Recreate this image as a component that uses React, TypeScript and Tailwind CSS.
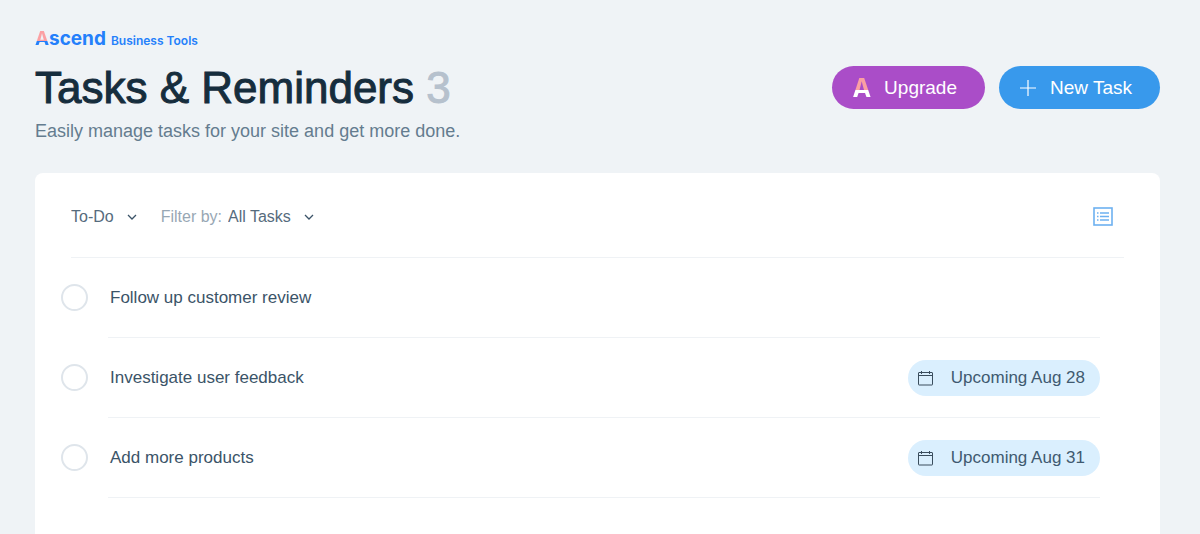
import { useState } from 'react';

interface Task {
  id: number;
  title: string;
  due?: string;
}

const TASKS: Task[] = [
  { id: 1, title: 'Follow up customer review' },
  { id: 2, title: 'Investigate user feedback', due: 'Aug 28' },
  { id: 3, title: 'Add more products', due: 'Aug 31' },
];

function Chevron() {
  return (
    <svg viewBox="0 0 10 6" className="pointer-events-none -ml-5 h-[6px] w-[10px]" fill="none" stroke="#3b5368" strokeWidth="1.3">
      <path d="M1 1l4 4 4-4" />
    </svg>
  );
}

function CalendarIcon() {
  return (
    <svg viewBox="0 0 16 16" className="size-4 shrink-0" fill="none" stroke="#3a4d5d">
      <rect x="0.5" y="2.5" width="14" height="12.5" rx="0.5" />
      <path d="M0.5 5.5h14M3.5 1v3M11.5 1v3" />
    </svg>
  );
}

function ListIcon() {
  return (
    <svg viewBox="0 0 20 20" className="size-5" fill="none" stroke="#6db1f1">
      <rect x="1" y="1" width="18" height="17" strokeWidth="1.6" />
      <path d="M4 6h1.5M4 9.5h1.5M4 13h1.5M7 6h9M7 9.5h9M7 13h9" strokeWidth="1.3" />
    </svg>
  );
}

function TaskRow({ task }: { task: Task }) {
  const [done, setDone] = useState(false);
  const inputId = `task-${task.id}`;

  return (
    <li className="flex h-20 items-center gap-5">
      <input
        id={inputId}
        type="checkbox"
        checked={done}
        onChange={() => setDone(!done)}
        className="mb-[1px] size-[27px] shrink-0 cursor-pointer appearance-none rounded-full border-2 border-[#dfe5eb] bg-white checked:bg-[#3899ec]"
      />
      <div className="flex h-20 flex-1 items-center justify-between border-b border-[#eff2f5] pl-[2px]">
        <label htmlFor={inputId} className="text-[17px] text-[#3b5468]">
          {task.title}
        </label>
        {task.due && (
          <span className="flex h-9 items-center gap-[17px] rounded-full bg-[#daeffe] pr-[15px] pl-[10px] text-[17px] text-[#3f5a70]">
            <CalendarIcon />
            Upcoming {task.due}
          </span>
        )}
      </div>
    </li>
  );
}

export default function App() {
  const [status, setStatus] = useState('To-Do');
  const [filter, setFilter] = useState('All Tasks');

  return (
    <div className="flex min-h-screen flex-col bg-[#eff3f6] pt-[29px] pr-10 pl-[35px] font-['Liberation_Sans',sans-serif]">
      <header>
        <div className="flex h-5 items-baseline gap-[5px] text-[#2480fb]">
          <span className="font-['Inter',sans-serif] text-[19px] leading-5 font-bold">
            <span className="bg-linear-to-b from-[#fba0a3] from-62% to-[#2480fb] to-62% bg-clip-text text-transparent">A</span>scend
          </span>
          <span className="font-['Inter',sans-serif] text-[12px] leading-5 font-semibold">Business Tools</span>
        </div>

        <div className="mt-[17px] flex items-center justify-between">
          <h1 className="text-[44px] leading-[43px] text-[#162d3d] [-webkit-text-stroke:1px]">
            Tasks &amp; Reminders <span className="text-[#b6c1cd]">3</span>
          </h1>
          <div className="flex gap-[14px] text-[19px] text-white">
            <button type="button" className="flex h-[43px] items-center gap-[13px] rounded-full bg-[#aa4dc8] pt-[1px] pr-7 pl-5">
              <span className="bg-linear-to-b from-[#fba0a3] from-58% to-white to-58% bg-clip-text font-['Inter',sans-serif] text-[25px] leading-7 font-bold text-transparent">
                A
              </span>
              Upgrade
            </button>
            <button type="button" className="flex h-[43px] items-center gap-[14px] rounded-full bg-[#3899ec] pt-[1px] pr-7 pl-[21px]">
              <svg viewBox="0 0 16 16" className="size-4" stroke="white" strokeWidth="1.2">
                <path d="M0 8h16M8 0v16" />
              </svg>
              New Task
            </button>
          </div>
        </div>

        <p className="mt-[11px] text-[18px] leading-[22px] text-[#647c8f]">
          Easily manage tasks for your site and get more done.
        </p>
      </header>

      <main className="mt-[31px] flex-1 rounded-t-lg bg-white">
        {/* Filters */}
        <div className="mx-9 flex h-[85px] items-center justify-between border-b border-[#eff2f5] pt-1 text-[16px] text-[#566b7d]">
          <div className="flex items-center gap-6">
            <div className="flex items-center">
              <select
                aria-label="Status"
                value={status}
                onChange={(e) => setStatus(e.target.value)}
                className="field-sizing-content appearance-none bg-transparent pr-[33px]"
              >
                <option>To-Do</option>
                <option>Done</option>
              </select>
              <Chevron />
            </div>
            <div className="flex items-center">
              <label htmlFor="filter" className="mr-[6px] text-[#98a7b4]">
                Filter by:
              </label>
              <select
                id="filter"
                value={filter}
                onChange={(e) => setFilter(e.target.value)}
                className="field-sizing-content appearance-none bg-transparent pr-[33px]"
              >
                <option>All Tasks</option>
                <option>My Tasks</option>
              </select>
              <Chevron />
            </div>
          </div>
          <button type="button" aria-label="List view" className="mr-[11px]">
            <ListIcon />
          </button>
        </div>

        {/* Tasks */}
        <ul className="pr-[60px] pl-[26px]">
          {TASKS.map((task) => (
            <TaskRow key={task.id} task={task} />
          ))}
        </ul>
      </main>
    </div>
  );
}
